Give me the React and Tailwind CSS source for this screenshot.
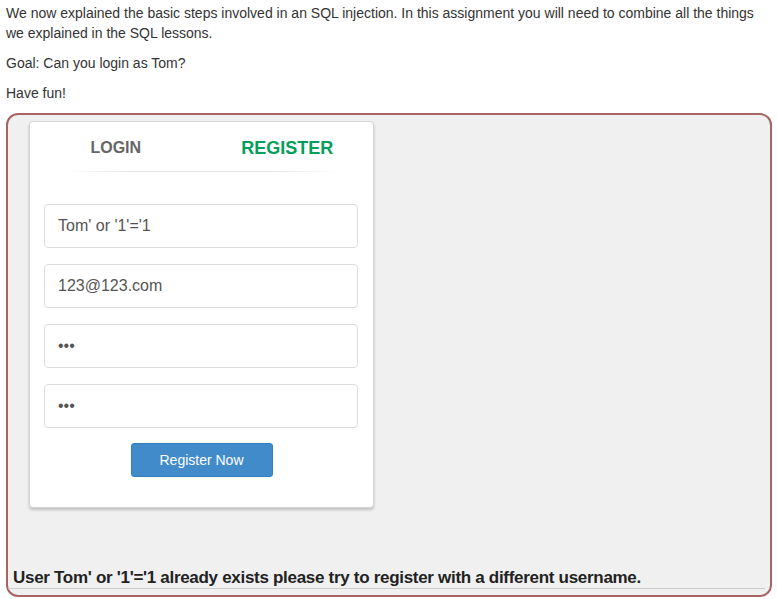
import React from "react";

export default function App() {
  return (
    <div className="w-[777px] h-[599px] overflow-hidden bg-white pl-[6px] pr-[6px] pt-[3px] text-[14px] leading-[20px] text-[#333]" style={{ fontFamily: '"Liberation Sans", Arial, sans-serif' }}>
      <p className="mb-[10px]">
        We now explained the basic steps involved in an SQL injection. In this assignment you will need to combine all the things we explained in the SQL lessons.
      </p>
      <p className="mb-[10px]">Goal: Can you login as Tom?</p>
      <p className="mb-[10px]">Have fun!</p>
      <div className="w-[766px] h-[484px] border-2 border-[#a86363] rounded-[12px] bg-[#f0f0f0] flex flex-col">
        <div className="ml-[21px] mt-[6px] w-[345px] h-[387px] bg-white border border-[#d5d5d5] rounded-[4px] shadow-[0_2px_3px_0_rgba(0,0,0,0.2)] flex flex-col">
          <div className="flex h-[49px] pt-[14px]">
            <div className="w-1/2 flex justify-center">
              <span className="text-[16px] font-bold text-[#666] leading-[22px] mt-[1px]">LOGIN</span>
            </div>
            <div className="w-1/2 flex justify-center">
              <span className="text-[18px] font-bold text-[#029f5b] leading-[22px] mt-[1px]">REGISTER</span>
            </div>
          </div>
          <div className="mx-[33px] h-px bg-[linear-gradient(to_right,rgba(0,0,0,0)_0%,rgba(0,0,0,0.1)_25%,rgba(0,0,0,0.1)_75%,rgba(0,0,0,0)_100%)]"></div>
          <div className="pl-[14px] pr-[15px] pt-[32px] flex flex-col gap-[16px]">
            <input readOnly defaultValue="Tom' or '1'='1" className="h-[44px] w-full border border-[#ddd] rounded-[4px] px-[13px] text-[16px] text-[#555] outline-none" style={{ fontFamily: '"Liberation Sans", Arial, sans-serif' }} />
            <input readOnly defaultValue="123@123.com" className="h-[44px] w-full border border-[#ddd] rounded-[4px] px-[13px] text-[16px] text-[#555] outline-none" style={{ fontFamily: '"Liberation Sans", Arial, sans-serif' }} />
            <input readOnly type="password" defaultValue="abc" className="h-[44px] w-full border border-[#ddd] rounded-[4px] px-[13px] text-[16px] text-[#555] outline-none" style={{ fontFamily: '"Liberation Sans", Arial, sans-serif' }} />
            <input readOnly type="password" defaultValue="abc" className="h-[44px] w-full border border-[#ddd] rounded-[4px] px-[13px] text-[16px] text-[#555] outline-none" style={{ fontFamily: '"Liberation Sans", Arial, sans-serif' }} />
          </div>
          <div className="flex justify-center mt-[15px]">
            <button className="w-[142px] h-[34px] bg-[#428bca] border border-[#357ebd] rounded-[3px] text-white text-[14px]" style={{ fontFamily: '"Liberation Sans", Arial, sans-serif' }}>
              Register Now
            </button>
          </div>
        </div>
        <div className="mt-[60px] pl-[5px] text-[17px] leading-[20px] font-bold tracking-[-0.3px] text-[#222]" style={{ fontFamily: '"Liberation Sans", Arial, sans-serif' }}>
          User Tom' or '1'='1 already exists please try to register with a different username.
        </div>
        <div className="mr-[5px] h-px bg-[#ccc]"></div>
      </div>
    </div>
  );
}
